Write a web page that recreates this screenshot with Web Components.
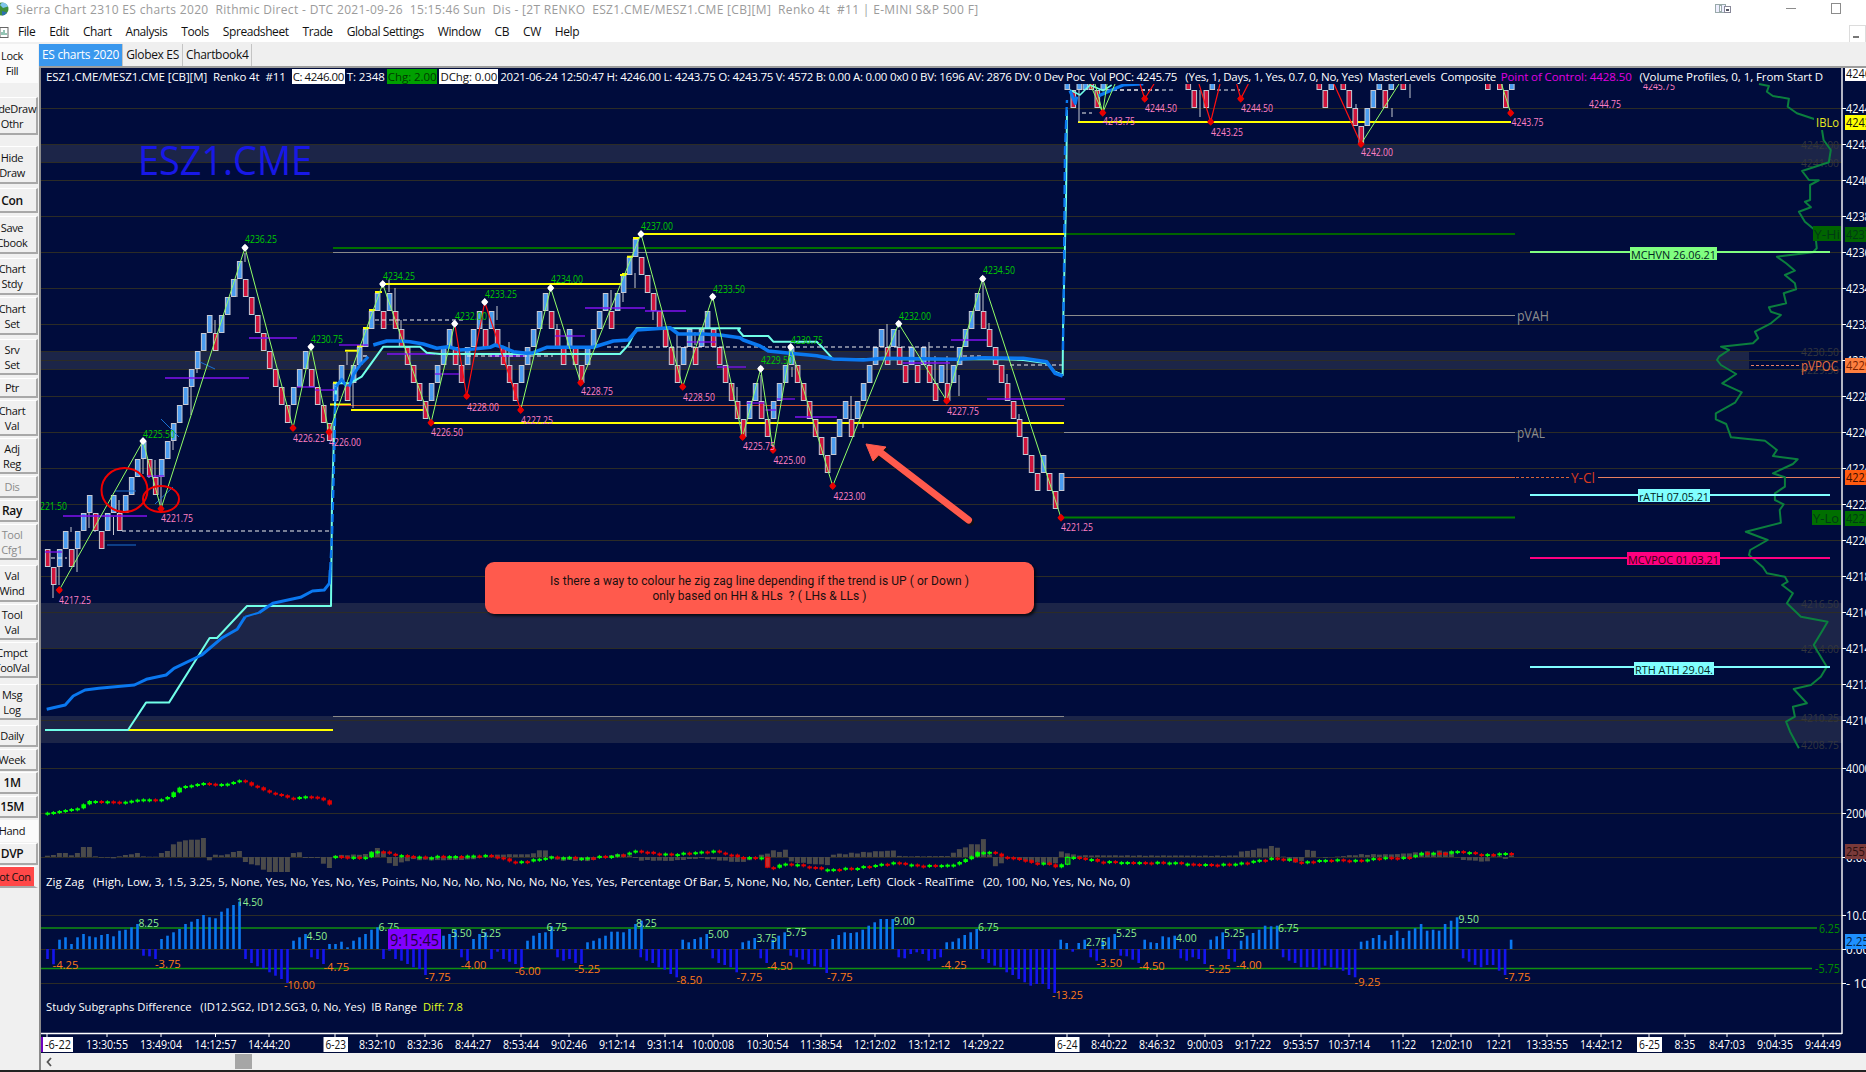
<!DOCTYPE html>
<html>
<head>
<meta charset="utf-8">
<title>Sierra Chart</title>
<style>
  html, body { margin: 0; padding: 0; overflow: hidden; background: #f0f0f0; }
  body { width: 1866px; height: 1072px; font-family: "Open Sans", Roboto, sans-serif; }
</style>
</head>
<body>
<sc-window>
  <sc-titlebar slot="title">Sierra Chart 2310 ES charts 2020&nbsp; Rithmic Direct - DTC 2021-09-26&nbsp; 15:15:46 Sun&nbsp; Dis - [2T RENKO&nbsp; ESZ1.CME/MESZ1.CME [CB][M]&nbsp; Renko 4t&nbsp; #11 | E-MINI S&amp;P 500 F]</sc-titlebar>
  <sc-menubar slot="menu"></sc-menubar>
  <sc-toolbar slot="tools">
    <sc-tool-button flat style="--h:39px;--gap:0px">Lock<br>Fill</sc-tool-button>
    <sc-tool-button style="--h:38px;--gap:14px">HideDraw<br>Othr</sc-tool-button>
    <sc-tool-button style="--h:38px;--gap:11px">Hide<br>Draw</sc-tool-button>
    <sc-tool-button strong style="--h:25px;--gap:4px">Con</sc-tool-button>
    <sc-tool-button style="--h:38px;--gap:3px">Save<br>Cbook</sc-tool-button>
    <sc-tool-button style="--h:37px;--gap:4px">Chart<br>Stdy</sc-tool-button>
    <sc-tool-button style="--h:38px;--gap:2px">Chart<br>Set</sc-tool-button>
    <sc-tool-button style="--h:36px;--gap:4px">Srv<br>Set</sc-tool-button>
    <sc-tool-button style="--h:20px;--gap:3px">Ptr</sc-tool-button>
    <sc-tool-button style="--h:36px;--gap:2px">Chart<br>Val</sc-tool-button>
    <sc-tool-button style="--h:36px;--gap:2px">Adj<br>Reg</sc-tool-button>
    <sc-tool-button dim style="--h:22px;--gap:2px">Dis</sc-tool-button>
    <sc-tool-button strong style="--h:22px;--gap:2px">Ray</sc-tool-button>
    <sc-tool-button dim style="--h:36px;--gap:2px">Tool<br>Cfg1</sc-tool-button>
    <sc-tool-button style="--h:37px;--gap:5px">Val<br>Wind</sc-tool-button>
    <sc-tool-button style="--h:36px;--gap:2px">Tool<br>Val</sc-tool-button>
    <sc-tool-button style="--h:36px;--gap:2px">Cmpct<br>ToolVal</sc-tool-button>
    <sc-tool-button style="--h:36px;--gap:6px">Msg<br>Log</sc-tool-button>
    <sc-tool-button style="--h:22px;--gap:5px">Daily</sc-tool-button>
    <sc-tool-button style="--h:22px;--gap:2px">Week</sc-tool-button>
    <sc-tool-button strong style="--h:22px;--gap:1px">1M</sc-tool-button>
    <sc-tool-button strong style="--h:22px;--gap:2px">15M</sc-tool-button>
    <sc-tool-button flat style="--h:22px;--gap:2px">Hand</sc-tool-button>
    <sc-tool-button strong style="--h:22px;--gap:1px">DVP</sc-tool-button>
    <sc-tool-button alert style="--h:22px;--gap:1px">Not Con</sc-tool-button>
  </sc-toolbar>
  <sc-tabs slot="tabs">
    <sc-tab active>ES charts 2020</sc-tab>
    <sc-tab>Globex ES</sc-tab>
    <sc-tab>Chartbook4</sc-tab>
  </sc-tabs>
  <sc-chart slot="chart">
    <sc-study-header>
      <span style="margin-right:4px">ESZ1.CME/MESZ1.CME [CB][M]&nbsp; Renko 4t&nbsp; #11</span>
      <sc-chip white style="letter-spacing:-.48px">C: 4246.00</sc-chip>
      <span>T: 2348</span>
      <sc-chip green>Chg: 2.00</sc-chip>
      <sc-chip white>DChg: 0.00</sc-chip>
      <span style="letter-spacing:-.26px">2021-06-24 12:50:47 H: 4246.00 L: 4243.75 O: 4243.75 V: 4572 B: 0.00 A: 0.00 0x0 0 BV: 1696 AV: 2876 DV: 0 Dev Poc&nbsp; Vol POC: 4245.75&nbsp; &nbsp;(Yes, 1, Days, 1, Yes, 0.7, 0, No, Yes)&nbsp; MasterLevels&nbsp; Composite&nbsp;</span>
      <sc-chip magenta>Point of Control: 4428.50</sc-chip>
      <span>&nbsp; (Volume Profiles, 0, 1, From Start D</span>
    </sc-study-header>
    <sc-callout>
      Is there a way to colour he zig zag line depending if the trend is UP ( or Down )<br>
      only based on HH &amp; HLs&nbsp; ? ( LHs &amp; LLs )
    </sc-callout>
  </sc-chart>
  <sc-scrollbar slot="scroll"></sc-scrollbar>
</sc-window>

<script>
class ScWindow extends HTMLElement {
  constructor() {
    super();
    this.attachShadow({ mode: "open" });
    this.shadowRoot.innerHTML = `
      <style>
        :host { display: block; width: 1866px; height: 1072px; overflow: hidden; }
        .wrap { display: grid; grid-template-columns: 39px 1fr; grid-template-rows: 21px 21px 1fr; height: 1070px; }
        .head { grid-column: 1 / 3; }
        .tools { grid-row: 3; }
        .right { grid-row: 3; display: flex; flex-direction: column; min-width: 0; border-left: 2px solid #8a8a8a; }
        .edge { height: 2px; background: #222; }
      </style>
      <div class="wrap">
        <div class="head"><slot name="title"></slot></div>
        <div class="head"><slot name="menu"></slot></div>
        <div class="tools"><slot name="tools"></slot></div>
        <div class="right">
          <slot name="tabs"></slot>
          <slot name="chart"></slot>
          <slot name="scroll"></slot>
        </div>
      </div>
      <div class="edge"></div>`;
  }
}
customElements.define("sc-window", ScWindow);

class ScTitlebar extends HTMLElement {
  constructor() {
    super();
    this.attachShadow({ mode: "open" });
    this.shadowRoot.innerHTML = `
      <style>
        :host { display: block; height: 21px; background: #fff; position: relative; overflow: hidden; }
        .text { position: absolute; left: 16px; top: 2px; font: 12px/16px "Open Sans", sans-serif; color: #9b9b9b; white-space: nowrap; letter-spacing: .33px; }
        svg { position: absolute; }
      </style>
      <svg style="left:-6px;top:2px" width="16" height="14" viewBox="0 0 16 14">
        <circle cx="8" cy="7" r="6.5" fill="#3f8f3a"/>
        <path d="M8 .5a6.5 6.5 0 0 1 6 4L9 6 6 3z" fill="#7fc4ea"/>
        <path d="M8 13.5a6.5 6.5 0 0 0 5-3L8 9z" fill="#2d6fb0"/>
      </svg>
      <div class="text"><slot></slot></div>
      <svg style="left:1715px;top:4px" width="16" height="10" viewBox="0 0 16 10">
        <rect x=".5" y=".5" width="10" height="8" fill="#eef" stroke="#9aa"/>
        <rect x="4.5" y="1.5" width="2" height="6" fill="#fff" stroke="#9aa"/>
        <rect x="9.5" y="2.5" width="6" height="6" fill="#fff" stroke="#889"/>
        <rect x="11" y="5" width="3" height="2" fill="#556"/>
      </svg>
      <svg style="left:1786px;top:8px" width="10" height="2"><rect width="10" height="1" fill="#8c8c8c"/></svg>
      <svg style="left:1831px;top:3px" width="10" height="11"><rect x=".5" y=".5" width="9" height="10" fill="none" stroke="#8c8c8c"/></svg>`;
  }
}
customElements.define("sc-titlebar", ScTitlebar);

class ScMenubar extends HTMLElement {
  constructor() {
    super();
    this.attachShadow({ mode: "open" });
    const items = ["File", "Edit", "Chart", "Analysis", "Tools", "Spreadsheet", "Trade", "Global Settings", "Window", "CB", "CW", "Help"];
    this.shadowRoot.innerHTML = `
      <style>
        :host { display: flex; height: 21px; background: #fff; position: relative; overflow: hidden; padding-left: 18px; gap: 14px; align-items: center; font: 12px/16px "Open Sans", sans-serif; color: #111; box-sizing: border-box; }
        span { letter-spacing: -.43px; }
        svg { position: absolute; left: 0; top: 6px; }
        .mini { position: absolute; left: 1849px; top: 4px; width: 15px; height: 17px; border: 1px solid #dcdcdc; background: #fff; }
        .mini i { position: absolute; left: 3px; top: 10px; width: 6px; height: 2px; background: #777; }
      </style>
      <svg width="9" height="12" viewBox="0 0 9 12"><rect x="0" y=".5" width="8" height="10" fill="#fff" stroke="#666"/><path d="M2 8V5M4 8V3M6 8V6" stroke="#2a8a6a"/></svg>
      ${items.map(i => `<span>${i}</span>`).join("")}
      <div class="mini"><i></i></div>`;
  }
}
customElements.define("sc-menubar", ScMenubar);

class ScToolbar extends HTMLElement {
  constructor() {
    super();
    this.attachShadow({ mode: "open" });
    this.shadowRoot.innerHTML = `
      <style>
        :host { display: flex; flex-direction: column; height: 100%; padding-top: 2px; box-sizing: border-box; background: #f0f0f0; overflow: hidden; }
      </style>
      <slot></slot>`;
  }
}
customElements.define("sc-toolbar", ScToolbar);

class ScToolButton extends HTMLElement {
  constructor() {
    super();
    this.attachShadow({ mode: "open" });
    this.shadowRoot.innerHTML = `
      <style>
        :host { display: flex; flex: none; align-items: center; justify-content: center; height: var(--h); margin-top: var(--gap); margin-left: -12px; width: 50px; box-sizing: border-box;
          padding-left: 0; background: #f0f0f0; border-right: 2px solid #a8a8a8; border-bottom: 2px solid #a8a8a8; border-top: 1px solid #fff;
          font: 11px/15px "Open Sans", sans-serif; color: #111; text-align: center; white-space: nowrap; letter-spacing: -.35px; }
        :host([flat]) { background: #fbfbfb; border-color: #fbfbfb; }
        :host([strong]) { font-weight: 600; font-size: 12px; }
        :host([dim]) { color: #8b8b8b; }
        :host([alert]) { background: #ff4848; border-right: 4px solid #f0f0f0; border-bottom-color: #a8a8a8; justify-content: center; }
      </style>
      <div><slot></slot></div>`;
  }
}
customElements.define("sc-tool-button", ScToolButton);

class ScTabs extends HTMLElement {
  constructor() {
    super();
    this.attachShadow({ mode: "open" });
    this.shadowRoot.innerHTML = `
      <style>
        :host { display: flex; flex: none; height: 26px; box-sizing: border-box; padding-top: 2px; background: #efefef; border-bottom: 2px solid #9c9c9c; margin-left: -2px; }
      </style>
      <slot></slot>`;
  }
}
customElements.define("sc-tab", class extends HTMLElement {
  constructor() {
    super();
    this.attachShadow({ mode: "open" });
    this.shadowRoot.innerHTML = `
      <style>
        :host { display: flex; align-items: center; height: 22px; padding: 0 3px; margin-left: 0; border-right: 1px solid #c4c4c4; font: 12px/16px "Open Sans", sans-serif; color: #111; letter-spacing: -.32px; white-space: nowrap; }
        :host([active]) { background: #3a98ee; color: #fff; }
      </style>
      <slot></slot>`;
  }
});
customElements.define("sc-tabs", ScTabs);

class ScStudyHeader extends HTMLElement {
  constructor() {
    super();
    this.attachShadow({ mode: "open" });
    this.shadowRoot.innerHTML = `
      <style>
        :host { position: absolute; left: 5px; top: 1px; width: 1796px; height: 15px; display: flex; align-items: center; overflow: hidden; white-space: nowrap; font: 11.5px/15px "Open Sans", sans-serif; color: #fff; letter-spacing: -.08px; gap: 2px; }
        ::slotted(span) { flex: none; }
      </style>
      <slot></slot>`;
  }
}
customElements.define("sc-study-header", ScStudyHeader);

class ScChip extends HTMLElement {
  constructor() {
    super();
    this.attachShadow({ mode: "open" });
    this.shadowRoot.innerHTML = `
      <style>
        :host { display: block; flex: none; padding: 0 1px; height: 15px; }
        :host([white]) { background: #fff; color: #111; }
        :host([green]) { background: #00a000; color: #003c00; }
        :host([magenta]) { color: #e000e0; padding: 0; }
      </style>
      <slot></slot>`;
  }
}
customElements.define("sc-chip", ScChip);

class ScCallout extends HTMLElement {
  constructor() {
    super();
    this.attachShadow({ mode: "open" });
    this.shadowRoot.innerHTML = `
      <style>
        :host { position: absolute; left: 444px; top: 494px; width: 549px; height: 52px; box-sizing: border-box; padding-top: 12px; display: block; background: #ff5a4d; border-radius: 9px; box-shadow: 2px 2px 3px rgba(0,0,0,.75); text-align: center; font: 12px/15px Roboto, sans-serif; color: #191010; letter-spacing: .07px; }
      </style>
      <slot></slot>`;
  }
}
customElements.define("sc-callout", ScCallout);

class ScScrollbar extends HTMLElement {
  constructor() {
    super();
    this.attachShadow({ mode: "open" });
    this.shadowRoot.innerHTML = `
      <style>
        :host { display: block; flex: none; height: 17px; background: #f0f0f0; position: relative; }
        .thumb { position: absolute; left: 194px; top: 1px; width: 17px; height: 15px; background: #a6a6a6; }
        svg { position: absolute; left: 5px; top: 4px; }
      </style>
      <svg width="6" height="10" viewBox="0 0 6 10"><path d="M5 1 1.5 5 5 9" fill="none" stroke="#555" stroke-width="1.8"/></svg>
      <div class="thumb"></div>`;
  }
}
customElements.define("sc-scrollbar", ScScrollbar);

// chart canvas, drawn in page coordinates through the viewBox
class ScChart extends HTMLElement {
  constructor() {
    super();
    this.attachShadow({ mode: "open" });
    this.render();
  }

  text(x, y, s, fill, size, len, extra) {
    const l = len ? ` textLength="${len}" lengthAdjust="spacingAndGlyphs"` : "";
    s = s.replace(/&/g, "&amp;");
    return `<text x="${x}" y="${y}" dominant-baseline="central" fill="${fill}" font-size="${size}"${l} ${extra || ""}>${s}</text>`;
  }

  hline(x1, x2, y, color, w, dash) {
    return `<line x1="${x1}" x2="${x2}" y1="${y}" y2="${y}" stroke="${color}" stroke-width="${w || 1}"${dash ? ` stroke-dasharray="${dash}"` : ""}/>`;
  }

  poly(pts, color, w, extra) {
    return `<polyline points="${pts.map(p => p[0].toFixed(1) + "," + p[1].toFixed(1)).join(" ")}" fill="none" stroke="${color}" stroke-width="${w}" stroke-linejoin="round" ${extra || ""}/>`;
  }

  bricks(str, x0, a, b) {
    const out = [];
    [...str].forEach((c, i) => {
      if (c === "U") { b = a; a = a - 18; } else { a = b; b = b + 18; }
      out.push([x0 + i * 6, a, b, c]);
    });
    return out;
  }

  lerp(keys, x) {
    for (let i = 1; i < keys.length; i++) {
      if (x <= keys[i][0]) {
        const k = (x - keys[i - 1][0]) / (keys[i][0] - keys[i - 1][0] || 1);
        return keys[i - 1][1] + (keys[i][1] - keys[i - 1][1]) * k;
      }
    }
    return keys[keys.length - 1][1];
  }

  render() {
    const T = this.text, H = this.hline, P = this.poly.bind(this);
    const z2 = p => [p[0] / 2.529, p[1] / 3 + 360];
    const z7 = p => [1240 + p[0] / 2.505, p[1] / 3];
    const z8 = p => [1240 + p[0] / 2.505, p[1] / 3 + 360];
    const z10 = p => [320 + p[0] / 3, 260 + p[1] / 3];
    const z11 = p => [730 + p[0] / 3, 260 + p[1] / 3];
    const z12 = p => [1060 + p[0] / 3, 70 + p[1] / 3];
    let s = "";

    // shaded bands and grid
    [[144, 162, 1842], [351, 369, 1749], [603, 648, 1842], [716, 743, 1842]].forEach(b => {
      s += `<rect x="41" y="${b[0]}" width="${b[2] - 41}" height="${b[1] - b[0]}" fill="#1c2548"/>`;
    });
    [108, 144, 162, 180, 216, 252, 288, 324, 351, 369, 360, 396, 432, 468, 504, 540, 576, 612, 648, 684, 720, 768, 813, 857, 915, 949, 983].forEach(y => {
      s += H(41, 1842, y + .5, "#2c2c26");
    });
    [["4242.00", 144], ["4241.00", 162], ["4230.50", 351], ["4229.50", 369], ["4216.50", 603], ["4214.00", 648], ["4210.25", 717], ["4208.75", 744]].forEach(l => {
      s += T(1801, l[1], l[0], "#33363e", 11, 38);
    });

    // long level lines
    s += H(333, 1064, 252.5, "#8a8a8a");
    s += H(333, 1064, 716.5, "#8a8a8a");
    s += H(333, 1064, 248, "#007000", 2);
    s += H(641, 1064, 234, "#ffff00", 2);
    s += H(1064, 1515, 234, "#006400", 2);
    s += H(382, 622, 284, "#ffff00", 2);
    s += H(431, 1064, 423, "#ffff00", 2);
    s += H(351, 423, 410, "#ffff00", 2);
    s += H(330, 351, 404.5, "#ffff00", 2);
    s += H(333, 1064, 405.5, "#c8502a");
    s += H(1078, 1511, 122, "#ffff00", 2);
    s += H(1064, 1515, 517.5, "#008000", 2);
    s += H(1064, 1515, 315.5, "#8c8c8c");
    s += H(1064, 1515, 432.5, "#8c8c8c");
    s += H(1064, 1515, 477.5, "#d8643c");
    s += H(1516, 1570, 477.5, "#d8643c", 1, "3 2");
    s += H(1598, 1840, 477.5, "#e88060");
    s += H(1751, 1799, 365.5, "#e88060", 1, "3 2");
    s += H(45, 128, 730, "#70ffff", 2);
    s += H(128, 333, 730, "#ffff00", 2);
    s += H(41, 1817, 928, "#109010", 1.5);
    s += H(41, 1812, 968.5, "#109010", 1.5);

    s += T(1517, 315, "pVAH", "#8c8c8c", 14, 32);
    s += T(1517, 432, "pVAL", "#8c8c8c", 14, 28);
    s += T(1571, 477, "Y-Cl", "#d83a20", 14, 24);
    s += T(1801, 365, "pVPOC", "#e8703c", 14, 37);

    // volume profile curve
    const vp1 = [[1300,252],[1325,258],[1320,275],[1335,288],[1375,296],[1372,320],[1395,340],[1440,358]].map(z7);
    const vp2 = [[1458,390],[1462,420],[1480,450],[1475,487],[1408,513],[1425,540],[1450,541],[1428,555],[1428,600],[1415,605],[1430,622],[1400,635],[1415,665],[1440,690],[1445,745],[1435,757],[1345,770],[1368,790],[1390,812],[1365,825],[1390,850],[1393,868],[1362,880],[1368,910],[1325,922],[1330,935],[1355,945],[1330,970],[1290,995],[1298,1015],[1285,1030],[1205,1040],[1225,1050],[1200,1070]].map(z7)
      .concat([[1195,0],[1205,15],[1243,42],[1208,70],[1257,97],[1240,128],[1192,160],[1192,178],[1218,192],[1230,232],[1315,242],[1345,270],[1335,288],[1397,298],[1385,312],[1335,340],[1365,352],[1365,380],[1340,400],[1340,420],[1362,433],[1352,450],[1355,488],[1267,515],[1322,540],[1278,570],[1275,585],[1310,622],[1320,640],[1365,650],[1372,665],[1358,675],[1385,700],[1370,730],[1405,770],[1472,785],[1460,810],[1437,855],[1470,920],[1455,950],[1430,975],[1387,987],[1420,1030],[1385,1040],[1390,1070],[1368,1085],[1378,1115],[1400,1165]].map(z8));
    s += P(vp1, "#0b7f3e", 2) + P(vp2, "#0b7f3e", 2);

    // volume bars under the mini candles
    const day1Vol = [4,6,12,12,5,12,30,30,2,-2,-2,-4,2,6,8,12,2,1,1,12,18,38,46,50,52,52,57,-10,7,5,8,15,18,-15,-22,-25,-38,-45,-45,-45,-45,12,14,-3,-3,-3,-20,-33];
    const volKeys = [[335,5],[365,8],[372,18],[377,28],[383,18],[389,-20],[395,-25],[401,-20],[410,-8],[440,-10],[470,-8],[500,8],[530,8],[545,25],[555,-10],[590,-12],[610,6],[625,10],[640,-10],[670,-12],[700,-4],[735,-15],[745,-15],[760,5],[775,20],[786,20],[790,-15],[827,-25],[833,8],[893,20],[900,2],[950,3],[956,20],[984,50],[990,5],[994,-25],[1001,-25],[1010,5],[1015,-5],[1055,-25],[1061,15],[1067,15],[1075,5],[1235,4],[1240,15],[1280,35],[1285,-15],[1305,-15],[1306,20],[1316,20],[1320,-4],[1360,8],[1395,8],[1410,12],[1450,20],[1460,-8],[1490,-15],[1495,10],[1505,-6],[1511,6]];
    for (let i = 0; i < 245; i++) {
      const x = 47.4 + i * 6;
      let v = i < 48 ? day1Vol[i] : this.lerp(volKeys, x + .0) * (0.75 + 0.35 * Math.abs(Math.sin(i * 1.7)));
      const h = v / 3;
      s += `<rect x="${(x - 2.5).toFixed(1)}" y="${(h > 0 ? 857 - h : 857).toFixed(1)}" width="5" height="${Math.abs(h).toFixed(1)}" fill="#4a4a4a"/>`;
    }

    // mini candles
    const day1Close = [278,276,273,270,267,265,253,243,243,244,244,245,246,245,242,239,238,238,239,238,231,217,203,198,196,192,189,191,193,192,191,186,181,187,197,202,211,218,222,226,233,235,231,229,230,233,241,254];
    const z3 = p => [p[0] / 2.529, p[1]];
    const z6 = p => [620 + p[0] / 2.529, p[1]];
    const z9 = p => [1240 + p[0] / 2.505, p[1] + (760 - 720) * 3];
    const closeKeys = [[845,409],[875,412],[905,413],[925,410],[940,398],[955,392],[970,395],[985,403],[1010,406],[1040,409],[1075,413],[1090,411],[1120,408],[1165,410],[1185,408],[1210,405],[1240,408],[1260,412],[1280,420],[1303,427],[1330,423],[1365,416],[1380,412],[1440,412],[1470,415],[1530,408]].map(z3)
      .concat([[0,405],[40,393],[55,393],[90,402],[130,403],[190,397],[235,393],[270,403],[310,413],[370,413],[373,445],[385,442],[420,430],[460,437],[525,449],[600,443],[660,433],[700,427],[730,435],[790,437],[830,435],[858,428],[885,410],[905,398],[930,393],[950,403],[975,412],[1010,417],[1040,428],[1080,431],[1100,432],[1103,458],[1130,410],[1190,418],[1205,424],[1300,428],[1390,427],[1460,434],[1530,433]].map(z6))
      .concat([[0,310],[50,300],[80,295],[120,297],[155,310],[170,305],[210,300],[260,300],[305,302],[345,293],[410,293],[425,290],[460,278],[510,280],[545,273],[590,281],[620,284],[680,278]].map(z9));
    const drawMini = (x, prev, cur) => {
      const top = Math.min(prev, cur), h = Math.max(2, Math.abs(cur - prev));
      const up = cur <= prev;
      const big = h > 6;
      s += `<line x1="${x}" x2="${x}" y1="${(top - 1).toFixed(1)}" y2="${(top + h + 1).toFixed(1)}" stroke="${up ? "#00ff00" : "#e00000"}"/>`;
      s += `<rect x="${(x - 2).toFixed(1)}" y="${top.toFixed(1)}" width="4.5" height="${h.toFixed(1)}" fill="${big ? (up ? "#1c6a28" : "#c82c2c") : (up ? "#00ff00" : "#e40000")}" stroke="${up ? "#00ff00" : "#e00000"}" stroke-width="${big ? 1 : 0}"/>`;
    };
    day1Close.forEach((v, i) => {
      const prev = i ? day1Close[i - 1] : 281;
      drawMini(47.4 + i * 6, prev / 3 + 720, v / 3 + 720);
    });
    let last = 409 / 3 + 720;
    for (let i = 48; i < 245; i++) {
      const x = 47.4 + i * 6;
      if (x > 1513) break;
      const v = this.lerp(closeKeys, x) / 3 + 720 + Math.sin(i * 2.3) * 0.7;
      drawMini(x, last, v);
      last = v;
    }

    // study histogram
    const hist = [
      [47.4, [-30,-46,28,35,15,35,45,38,35,42,45,38,55,58,65,75,-20,-22,-30,30,40,50,60,75,82,90,102,95,92,112,122,132,142,-30,-42,-52,-58,-70,-80,-90,-102,25,35,45,-25,-30,-45,15,15,22,5,25,35,45,58,65,-30,-5,-30,-35,-45,-55,-60,-78,20,30,40,45,58,-25,-35,30,45,50,-30,-8,-30,-38,-45,-58,25,40,48,50,68,-25,-35,-30,-42,-45,20,25,32,40,52,52,50,60,75,85]],
      [640.6, [-25,-35,-42,-55,-62,-75,-85,28,20,30,35,45,-28,-42,-48,-55,-70,20,25,33,-28,-42,28,40,50,-20,-25,-32,-45,-52,-55,-72,30,42,50,48,50,58,70,80,90,90,90,-25,-28,-15,-10,-15,-35,-30,-25,20,22,32,42,50,60,-30,-42,-50,-55,-70,-78,-90,-100,-110,-105,-105,-120,-132,28,18,-8,18,28,-25,-35,25,35,45,-20,-22,-32,-42,28,20,18,38,35,40,-28,-35,-25,-30,-45,28,38,50,-30,-38]],
      [1241, [25,40,48,58,70,68,70,-25,-35,-42,-55,-55,-55,-62,-50,-55,-58,-65,-78,-85,22,25,33,42,25,42,55,33,55,62,75,55,58,55,75,85,95,-28,-38,-48,-55,-48,-48,-65,-78,28]]
    ];
    hist.forEach(seg => seg[1].forEach((v, i) => {
      const x = seg[0] + i * 6, h = v / 3;
      s += `<rect x="${(x - 1.2).toFixed(1)}" y="${(h > 0 ? 949 - h : 949).toFixed(1)}" width="2.6" height="${Math.abs(h).toFixed(1)}" fill="${h > 0 ? "#0a78f0" : "#1414f0"}"/>`;
    }));

    // price pane, clipped under the header strip
    let c = "";
    const wicks = [[353,383,408],[347,352,365],[395,288,312],[389,280,292],[401,320,330],[497,306,320],[509,342,365],[557,324,330],[611,290,310],[635,273,288],[623,293,302],[653,300,320],[677,335,365],[695,332,345],[737,387,401],[761,375,401],[792,367,377],[851,396,419],[863,423,428],[887,324,347],[899,330,347],[929,342,365],[935,356,383],[947,356,383],[959,375,396],[983,283,311],[989,323,329],[1007,374,383],[1019,414,419],[59,567,585],[53,585,598],[77,549,572],[71,527,532],[89,513,528],[95,520,532],[113.5,517,535],[119,500,513],[143,459,474],[149,473,478],[155,460,478],[161,477,505],[173,441,450],[191,387,415],[197,357,373],[215,320,335],[237,279,297],[245,253,262],[1079,90,122],[1200,90,117],[1356,104,108],[1392,108,117],[1410,84,98]];
    wicks.forEach(w => { c += `<line x1="${w[0]}" x2="${w[0]}" y1="${w[1]}" y2="${w[2]}" stroke="#c4c8d0"/>`; });

    const day1 = "DDUUDUUUDDUUDUUUUDDUUUUUUUUUDUUUUDDDDDDDDUUUDDDD";
    const day2 = "UUDUUUUU" + "DU" + "DDDDDD" + "UUUU" + "DD" + "UUU" + "DU" + "DDDD" + "UUUUU" + "DDD" + "U" + "DD" + "UUUU" + "D" + "UUUU" + "DDDDDDD" + "UU" + "D" + "UU" + "DDDDD" + "D" + "UU" + "DD" + "UUUU" + "DDDDDD" + "UUU" + "D" + "UUUUU" + "D" + "U" + "DD" + "U" + "D" + "U" + "DD" + "U" + "D" + "UUUUU" + "DDDDDDDD" + "DD" + "U" + "DD" + "U";
    const bars = this.bricks(day1, 47.4, 531, 549).concat(this.bricks(day2, 335.3, 401, 419));
    // third session only shows its lowest bricks under the header
    [[1067,"U",72],[1073,"D",90],[1079,"U",72],[1085,"U",72],[1091,"D",72],[1097,"D",90],[1103,"U",72],
     [1188,"D",72],[1194,"D",90],[1206,"D",90],[1212,"U",72],
     [1319,"D",72],[1325,"D",90],[1331,"U",72],[1343,"D",72],[1349,"D",90],[1355,"D",108],[1361,"D",126],[1367,"U",108],[1373,"U",90],[1379,"U",72],[1385,"D",90],[1391,"U",72],[1403,"D",72],
     [1487.5,"D",72],[1499.5,"D",72],[1505.5,"D",90],[1511.5,"U",72]].forEach(b => bars.push([b[0], b[2], b[2] + 18, b[1]]));
    bars.forEach(b => {
      c += `<rect x="${(b[0] - 2).toFixed(1)}" y="${b[1] + .5}" width="4.6" height="${b[2] - b[1] - 1}" fill="${b[3] === "U" ? "#4a9cf0" : "#d0143c"}" stroke="#c6cad4" stroke-width="1"/>`;
    });

    // yellow bar tops
    [[333,337,382.7],[345,357,350.7],[357,363,346],[363,369,328],[369,375,310],[375,382,292],[622,627,274],[620,626,275],[627,633,256.7],[633,639,238]].forEach(y => { c += H(y[0], y[1], y[2], "#ffff00", 2); });

    // short purple levels
    [[45,62,552],[63,147,516],[147,164,476],[165,249,378],[297,315,387],[315,334,390],[435,459,374],[249,297,338],[339,368,345],[387,435,354],[490,525,356],[555,585,336],[585,645,308],[645,686,311],[687,716,342],[951,987,340],[717,746,367],[746.5,764,403],[765.5,776,410],[777,795,399],[795,837,417],[903,950,363],[987,1065,399]].forEach(l => { c += H(l[0], l[1], l[2], "#8010f0", 1.3); });

    // short blue marks
    c += H(115, 136, 491, "#1a70d0") + H(107, 136, 545, "#1a70d0");
    [[161,419,179,437],[200,362,215,369],[155,504,173,487]].forEach(l => { c += `<line x1="${l[0]}" y1="${l[1]}" x2="${l[2]}" y2="${l[3]}" stroke="#1a70d0"/>`; });

    // white dashed levels
    [[122,332,531],[51,67,558],[375,463,320],[467,553,356],[363,370,356],[607,957,347],[963,983,356],[1010,1063,365],[1106,1158,90],[1082,1092,113],[1217,1240,90],[1106,1173,90]].forEach(l => { c += H(l[0], l[1], l[2], "#f0f0f0", 1.2, "4 3"); });

    // cyan and blue averages
    const cyan = [[45,730],[128,730],[146,702.6],[169,702.6],[209.6,638],[217,638],[247,606],[331,606],[332,500]]
      .concat([[45,430],[50,370],[90,370],[125,350],[190,260],[300,260],[320,278],[360,282],[900,282],[925,255],[950,205],[1060,205],[1260,205]].map(z10))
      .concat([[25,210],[40,228],[115,228],[130,245],[260,245],[280,265],[310,298],[390,298],[820,298],[880,300],[950,310],[975,335],[998,345]].map(z11))
      .concat([[1063,330],[1066,200],[1067,110]]);
    c += P(cyan, "#70ffe8", 2);
    c += P([[30,60],[60,75],[90,45],[130,62],[155,45]].map(z12), "#70ffe8", 1.6);
    const blue1 = [[118,1048],[165,1035],[185,1008],[215,990],[250,985],[340,975],[370,958],[420,945],[440,925],[510,885],[560,835],[600,808],[620,770]].map(z2);
    const blue2a = [[655,758],[690,730],[760,712],[790,693],[820,690],[833,670],[835,630]].map(z2);
    const blue2b = [[835,630],[840,520],[845,300],[848,130]].map(z2).concat([[45,430],[48,380]].map(z10));
    const blue2c = [[48,380],[65,358],[80,380]].map(z10);
    const blue3 = [[88,380],[100,345],[120,315],[145,290]].map(z10);
    const blue4 = [[160,255],[200,243],[240,243],[270,245],[310,252],[350,265],[385,260],[420,270],[460,267],[510,262],[525,255],[550,262],[580,275],[620,280],[640,278],[680,262],[760,262],[820,262],[880,243],[925,240],[950,210],[1050,203],[1075,222],[1150,222],[1200,225],[1260,233]].map(z10)
      .concat([[40,240],[90,258],[115,273],[180,280],[260,287],[310,297],[400,300],[460,295],[680,298],[760,293],[880,295],[950,305],[975,340],[998,348]].map(z11));
    c += P([[620,770],[655,758]].map(z2), "#0a78f0", 2);
    c += P(blue1, "#0a78f0", 3) + P(blue2a, "#0a78f0", 3) + P(blue2c, "#0a78f0", 3) + P(blue3, "#0a78f0", 3) + P(blue4, "#0a78f0", 3.6);
    c += P(blue2b, "#0a78f0", 2.4, 'stroke-dasharray="8 4"');
    c += P([[1063,350],[1064,270],[1065,150],[1067,100]], "#0a78f0", 2.4, 'stroke-dasharray="9 4"');
    c += P([[30,62],[46,100],[50,80]].map(z12), "#0a78f0", 3.2);
    c += P([[115,78],[150,62],[190,45],[250,42]].map(z12), "#0a78f0", 3.2);

    // zig zag legs
    const zigGreen = [[59.3,590],[143,441],[161,508.7],[245,247.7],[293,428],[311,346.7],[329,432],[382.7,284],[431,422.7],[454.7,323.7]];
    const zigRed = [[454.7,323.7],[466.7,396],[484.7,302],[520.7,410]];
    const zigGreen2 = [[520.7,410],[550.7,288],[580.7,382.7],[641,234],[682.7,386.7],[712.7,296.7],[742.6,437],[760.7,368.7],[773,450],[790.7,347],[832.7,486],[898.7,323.7],[946.7,400.7],[982.7,278.7],[1061,517.7]];
    c += P(zigGreen, "#90ff68", 1) + P(zigRed, "#ff1010", 1.2) + P(zigGreen2, "#90ff68", 1);
    [[[1090,84],[1102.7,112.7],[1115,84]],[[1095,84],[1102.7,112.7],[1107,84]]].forEach(l => { c += P(l, "#90ff68", 1); });
    [[[1140,84],[1144.7,98.7],[1154,84]],[[1199,84],[1210.7,121.7],[1220,84]],[[1236.7,84],[1240.7,98.7],[1248.3,84]],[[1334,84],[1361,144]]].forEach(l => { c += P(l, "#ff1010", 1.2); });
    c += P([[1361,144],[1399,84]], "#90ff68", 1) + P([[1501.5,84],[1510.7,113]], "#90ff68", 1);

    // pivot markers
    [[143,441],[245,247.7],[311,346.7],[382.7,284],[454.7,323.7],[484.7,302],[550.7,288],[641,234],[712.7,296.7],[760.7,368.7],[790.7,347],[898.7,323.7],[982.7,278.7]].forEach(p => {
      c += `<path d="M${p[0]} ${p[1] - 4}l3.6 4-3.6 4-3.6-4z" fill="#fff"/><circle cx="${p[0]}" cy="${p[1]}" r="2.6" fill="#fff"/>`;
    });
    [[59.3,590],[161,508.7],[293,428],[329,432],[431,422.7],[466.7,396],[520.7,410],[580.7,382.7],[682.7,386.7],[742.6,437],[773,450],[832.7,486],[946.7,400.7],[1061,517.7],[1102.7,112.7],[1144.7,98.7],[1210.7,121.7],[1240.7,98.7],[1361,144],[1510.7,113]].forEach(p => {
      c += `<path d="M${p[0]} ${p[1] - 4}l3.6 4-3.6 4-3.6-4z" fill="#e80000"/><circle cx="${p[0]}" cy="${p[1]}" r="2.6" fill="#e80000"/>`;
    });

    // pivot labels
    [["4236.25",245,239],["4230.75",311,338.7],["4234.25",383,276],["4234.00",551,279],["4233.25",485,293.7],["4232.00",455,315.7],["4233.50",713,288.7],["4237.00",641,225.7],["4230.75",791,339.7],["4229.50",761,360.3],["4232.00",899,315.7],["4234.50",983,270.3],["4221.50",35,505.7],["4225.50",143,433.7]].forEach(l => {
      c += T(l[1], l[2], l[0], "#00c800", 10.5, 32);
    });
    [["4217.25",59,599.7],["4221.75",161,518],["4226.25",293,437.7],["4226.00",329,441.7],["4226.50",431,432.3],["4228.00",467,406.7],["4227.25",521,419.7],["4228.75",581,391.3],["4228.50",683,396.7],["4225.75",743,445.7],["4225.00",773.4,460.3],["4223.00",833.5,496.3],["4227.75",947,410.7],["4221.25",1061,527.3],["4244.50",1145,108.3],["4243.75",1103,121.3],["4243.25",1211,131.7],["4244.50",1241,108.3],["4242.00",1361,152.3],["4243.75",1511.5,121.7],["4244.75",1589,103.7],["4245.75",1643,86]].forEach(l => {
      c += T(l[1], l[2], l[0], "#ff80c4", 10.5, 32);
    });

    // hand drawn circles and arrow
    c += `<ellipse cx="124.5" cy="490" rx="23" ry="22" fill="none" stroke="#f00000" stroke-width="2"/>`;
    c += `<ellipse cx="161" cy="499" rx="18" ry="13" fill="none" stroke="#f00000" stroke-width="2"/>`;
    const arrow = `<line x1="968.5" y1="520" x2="880" y2="452" stroke-width="7" stroke-linecap="round"/><polygon points="866,444 886,447 873,461"/>`;
    c += `<g fill="#101010" stroke="#101010" transform="translate(2,2)" opacity=".8">${arrow}</g><g fill="#ff5a4d" stroke="#ff5a4d">${arrow}</g>`;

    s += `<g clip-path="url(#pane)">${c}</g>`;
    s += T(138, 159, "ESZ1.CME", "#1818e8", 40, 174);

    // level tags on the right
    s += H(1530, 1830, 252, "#80ff80", 2) + H(1530, 1830, 495, "#80ffff", 2) + H(1530, 1830, 558, "#ff0080", 2) + H(1530, 1830, 667, "#80ffff", 2);
    [["MCHVN 26.06.21",1630,1717,247,"#80ff80","#022"],["rATH 07.05.21",1638,1710,489,"#80ffff","#022"],["MCVPOC 01.03.21",1627,1720,552,"#ff0080","#301"],["RTH ATH 29.04.",1634,1714,662,"#80ffff","#022"]].forEach(t => {
      s += `<rect x="${t[1]}" y="${t[3]}" width="${t[2] - t[1]}" height="13" fill="${t[4]}"/>`;
      s += T(t[1] + 1, t[3] + 7, t[0], t[5], 11.5, t[2] - t[1] - 2);
    });
    s += `<rect x="1813" y="226" width="28" height="15" fill="#006400"/>` + T(1814, 234, "Y-Hi", "#003a14", 13, 26);
    s += `<rect x="1812" y="510" width="29" height="15" fill="#006f00"/>` + T(1813, 518, "Y-Lo", "#003a14", 13, 26);
    s += `<rect x="1814" y="114" width="27" height="16" fill="#000c3c"/>` + T(1816, 122, "IBLo", "#e8e820", 13, 23);

    // study pane labels
    const sp = n => n.length * 5.15;
    [["14.50",237,901],["8.25",138.4,922],["4.50",306.5,935],["6.75",378.5,926.7],["5.50",451,932.3],["5.25",480.4,932.3],["6.75",546.5,926.7],["8.25",636,922],["5.00",708,933.3],["3.75",756.4,937.3],["5.75",786,931],["9.00",894,920],["6.75",978,926.7],["2.75",1086,941],["5.25",1116,932.3],["4.00",1176,937.3],["5.25",1224,932.3],["6.75",1278,927],["9.50",1458.4,918]].forEach(l => {
      s += T(l[1], l[2], l[0], "#90f090", 11.5, sp(l[0]));
    });
    [["-4.25",52.6,964.3],["-3.75",155,963.3],["-10.00",284,984.3],["-4.75",323.4,966],["-7.75",425,976],["-4.00",460.7,964],["-6.00",515,970],["-5.25",574.5,968.3],["-8.50",676.5,979],["-7.75",736.6,976],["-4.50",767,965],["-7.75",827,976],["-4.25",941,964.3],["-13.25",1052,994.3],["-3.50",1096.5,962],["-4.50",1139,965],["-5.25",1205,968.3],["-4.00",1236,964],["-9.25",1354.6,981],["-7.75",1504.6,976]].forEach(l => {
      s += T(l[1], l[2], l[0], "#ff7a18", 11.5, sp(l[0]));
    });
    s += T(1819, 928, "6.25", "#008a00", 12, 21) + T(1815, 968, "-5.75", "#008a00", 12, 25);
    s += `<rect x="388" y="929" width="53" height="20" fill="#8000ff"/>` + T(390, 939.5, "9:15:45", "#200040", 16, 49);

    s += T(46, 881, "Zig Zag   (High, Low, 3, 1.5, 3.25, 5, None, Yes, No, Yes, No, Yes, Points, No, No, No, No, No, No, No, Yes, Yes, Percentage Of Bar, 5, None, No, No, Center, Left)  Clock - RealTime   (20, 100, No, Yes, No, No, 0)", "#fff", 11.5, 1084, 'xml:space="preserve"');
    s += T(46, 1006, "Study Subgraphs Difference   (ID12.SG2, ID12.SG3, 0, No, Yes)  IB Range", "#fff", 11.5, 371, 'xml:space="preserve"');
    s += T(423, 1006, "Diff: 7.8", "#e4ff20", 11.5, 40);

    // axes
    s += H(41, 1842, 1033.5, "#fff", 1.4);
    s += `<line x1="1842" x2="1842" y1="68" y2="1034" stroke="#fff" stroke-width="1.4"/>`;
    [["4244",108],["4242",144],["4240",180],["4238",216],["4236",252],["4234",288],["4232",324],["4230",360],["4228",396],["4226",432],["4224",468],["4222",504],["4220",540],["4218",576],["4216",612],["4214",648],["4212",684],["4210",720],["4000",768],["2000",813]].forEach(l => {
      s += H(1842, 1846, l[1] + .5, "#fff") + T(1846, l[1], l[0] + ".00", "#fff", 12, 40);
    });
    [["0.00",857],["10.00",915],["0.00",949],["- 10.00",983]].forEach(l => {
      s += H(1842, 1846, l[1] + .5, "#fff") + T(1846, l[1], l[0], "#fff", 12, l[0].length * 5.8);
    });
    [["4246.00",73,"#fff","#111"],["4243.75",122,"#ffff00","#111"],["4237.00",234,"#006400","#003a14"],["4229.75",365,"#ff8040","#7a2000"],["4222.50",477,"#ff5a10","#401000"],["4221.25",518,"#006f00","#003a14"],["2557.00",851,"#7a3a3a","#2a1010"],["2.25",941,"#1e90ff","#02203f"]].forEach(l => {
      s += `<rect x="1845" y="${l[1] - 7}" width="21" height="15" fill="${l[2]}"/>` + T(1846, l[1], l[0], l[3], 12, l[0].length * 5.8);
    });

    const times = [["13:30:55",107],["13:49:04",161],["14:12:57",215.5],["14:44:20",269],["8:32:10",377],["8:32:36",425],["8:44:27",473],["8:53:44",521],["9:02:46",569],["9:12:14",617],["9:31:14",665],["10:00:08",713],["10:30:54",767.5],["11:38:54",821],["12:12:02",875],["13:12:12",929],["14:29:22",983],["8:40:22",1109],["8:46:32",1157],["9:00:03",1205],["9:17:22",1253],["9:53:57",1301],["10:37:14",1349],["11:22",1403],["12:02:10",1451],["12:21",1499],["13:33:55",1547],["14:42:12",1601],["8:35",1685],["8:47:03",1727],["9:04:35",1775],["9:44:49",1823]];
    times.forEach(t => {
      const w = t[0].length === 8 ? 42 : t[0].length === 7 ? 36 : t[0].length * 5.2;
      s += `<line x1="${t[1]}" x2="${t[1]}" y1="1034" y2="1037" stroke="#fff"/>`;
      s += T(t[1] - w / 2, 1044.5, t[0], "#fff", 12, w);
    });
    [["-6-22",43,73,47],["6-23",323.5,348,335],["6-24",1055,1079.5,1067],["6-25",1637,1662,1649]].forEach(d => {
      s += `<line x1="${d[3]}" x2="${d[3]}" y1="1034" y2="1037" stroke="#fff"/>`;
      s += `<rect x="${d[1]}" y="1037" width="${d[2] - d[1]}" height="15" fill="#fff"/>` + T(d[1] + 2, 1044.5, d[0], "#111", 12, d[2] - d[1] - 4);
    });
    s += `<rect x="41" y="1037" width="2" height="15" fill="#7000c0"/>`;

    this.shadowRoot.innerHTML = `
      <style>
        :host { display: block; flex: none; position: relative; height: 985px; background: #000c3c; overflow: hidden; }
        svg { display: block; position: absolute; left: 0; top: 0; font-family: "Open Sans", Roboto, sans-serif; }
        text { white-space: pre; }
      </style>
      <svg width="1825" height="985" viewBox="41 68 1825 985">
        <defs><clipPath id="pane"><rect x="41" y="84" width="1801" height="950"/></clipPath></defs>
        ${s}
      </svg>
      <slot></slot>`;
  }
}
customElements.define("sc-chart", ScChart);
</script>
</body>
</html>
